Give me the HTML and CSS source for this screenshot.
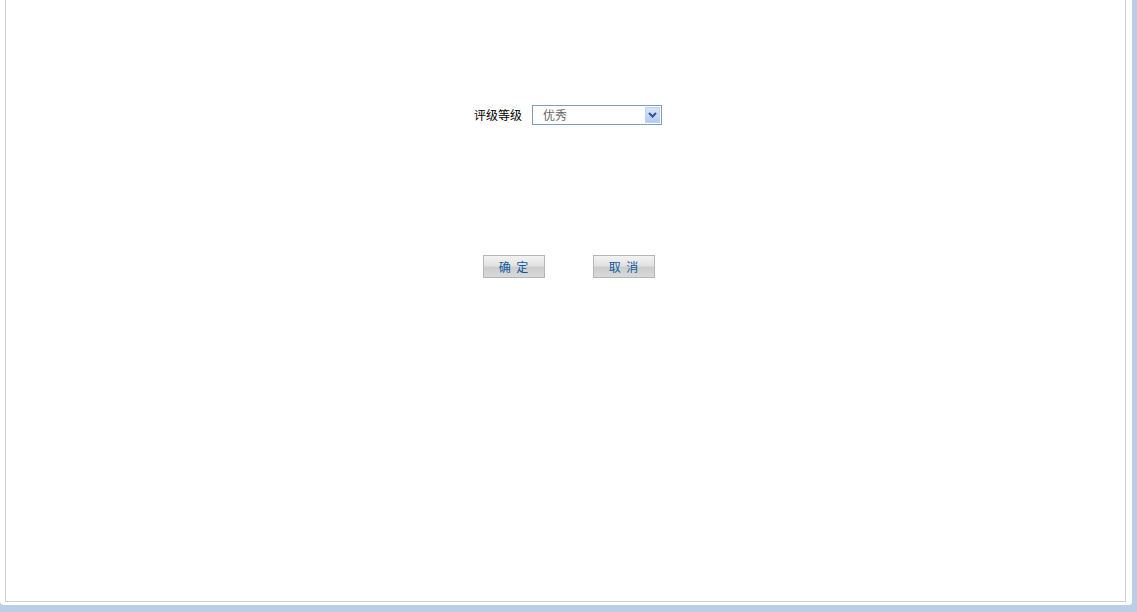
FILE: index.html
```html
<!DOCTYPE html>
<html lang="zh-CN">
<head>
<meta charset="utf-8">
<title>评级</title>
<link rel="stylesheet" href="styles.css">
</head>
<body>
<div class="frame">
  <div class="inner">
    <div class="form-row">
      <span class="label">评级等级</span>
      <div class="select">
        <span class="select-value">优秀</span>
        <span class="select-btn">
          <svg width="9" height="6" viewBox="0 0 9 6"><path d="M1 1 L4.5 4.5 L8 1" fill="none" stroke="#34538f" stroke-width="2"/></svg>
        </span>
      </div>
    </div>
    <div class="btn-row">
      <button class="btn">确&nbsp;&nbsp;定</button>
      <button class="btn">取&nbsp;&nbsp;消</button>
    </div>
  </div>
</div>
</body>
</html>
```

FILE: styles.css
```css
html, body {
  margin: 0;
  padding: 0;
}
body {
  background: #bccde6;
  width: 1137px;
  height: 612px;
  overflow: hidden;
  font-family: "Liberation Sans", "Noto Sans CJK SC", sans-serif;
  font-size: 12px;
}
.frame {
  width: 1127px;
  height: 605px;
  padding-left: 5px;
  background: #ffffff;
  border-bottom-left-radius: 4px;
  border-bottom-right-radius: 3px;
}
.inner {
  width: 1119px;
  height: 601px;
  border-left: 1px solid #cfcfcf;
  border-right: 1px solid #cfcfcf;
  border-bottom: 1px solid #cfcfcf;
  display: flex;
  flex-direction: column;
  align-items: center;
}
.form-row {
  margin-top: 105px;
  margin-left: 5px;
  display: flex;
  align-items: center;
  height: 20px;
}
.label {
  color: #000;
  font-family: "Noto Sans CJK SC", sans-serif;
  font-size: 12px;
  line-height: 20px;
  margin-right: 10px;
}
.select {
  width: 128px;
  height: 18px;
  border: 1px solid #7f9db9;
  display: flex;
  align-items: center;
  justify-content: space-between;
  background: #fff;
}
.select-value {
  font-family: "Noto Sans CJK SC", sans-serif;
  font-size: 12px;
  color: #666;
  padding-left: 10px;
  line-height: 18px;
}
.select-btn {
  width: 15px;
  height: 16px;
  margin-right: 1px;
  border: 1px solid #bcd0f5;
  background: linear-gradient(#d8e4fb, #b6cbf3);
  display: flex;
  align-items: center;
  justify-content: center;
  box-sizing: border-box;
}
.select-btn svg {
  display: block;
}
.btn-row {
  margin-top: 130px;
  margin-left: 6px;
  display: flex;
  gap: 48px;
}
.btn {
  width: 62px;
  height: 23px;
  padding: 0;
  border: 1px solid #b5b5b5;
  background: linear-gradient(#f3f3f3 0%, #e2e2e2 45%, #cdcdcd 55%, #d9d9d9 100%);
  color: #0d5a9e;
  font-family: "Noto Sans CJK SC", sans-serif;
  font-size: 12px;
  line-height: 21px;
  cursor: pointer;
}
```
